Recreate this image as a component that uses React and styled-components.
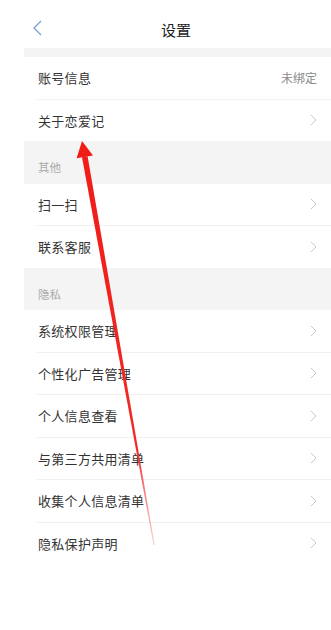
import React from "react";
import styled, { createGlobalStyle } from "styled-components";

const GlobalStyle = createGlobalStyle`
  html, body {
    margin: 0;
    padding: 0;
    background: #ffffff;
  }
  body {
    font-family: "Noto Sans CJK SC", "Noto Sans", sans-serif;
    -webkit-font-smoothing: antialiased;
  }
`;

const sections = [
  {
    title: null,
    items: [
      { label: "账号信息", value: "未绑定" },
      { label: "关于恋爱记" },
    ],
  },
  {
    title: "其他",
    items: [{ label: "扫一扫" }, { label: "联系客服" }],
  },
  {
    title: "隐私",
    items: [
      { label: "系统权限管理" },
      { label: "个性化广告管理" },
      { label: "个人信息查看" },
      { label: "与第三方共用清单" },
      { label: "收集个人信息清单" },
      { label: "隐私保护声明" },
    ],
  },
];

export default function App() {
  return (
    <>
      <GlobalStyle />
      <Screen>
        <Page>
          <Header>
            <BackButton aria-label="back">
              <svg width="10" height="16" viewBox="0 0 10 16">
                <path d="M9 1 L2 8 L9 15" fill="none" stroke="#7d9fd6" strokeWidth="1.3" />
              </svg>
            </BackButton>
            <Title>设置</Title>
          </Header>

          <TopGap />

          {sections.map((section, i) => (
            <React.Fragment key={i}>
              {section.title && <SectionHead>{section.title}</SectionHead>}
              <Group>
                {section.items.map((item, j) => (
                  <React.Fragment key={item.label}>
                    {j > 0 && <Divider />}
                    <Row>
                      <Label>{item.label}</Label>
                      {item.value ? (
                        <Value>{item.value}</Value>
                      ) : (
                        <Chevron width="7" height="12" viewBox="0 0 7 12">
                          <path d="M1 1 L6 6 L1 11" fill="none" stroke="#c9c9c9" strokeWidth="1" />
                        </Chevron>
                      )}
                    </Row>
                  </React.Fragment>
                ))}
              </Group>
            </React.Fragment>
          ))}
        </Page>

        <Annotation width="331" height="630" viewBox="0 0 331 630">
          <defs>
            <linearGradient id="shaft" x1="84" y1="157" x2="154" y2="545" gradientUnits="userSpaceOnUse">
              <stop offset="0" stopColor="#f01c18" />
              <stop offset="0.75" stopColor="#f02a26" />
              <stop offset="1" stopColor="#f07a78" stopOpacity="0.4" />
            </linearGradient>
          </defs>
          <polygon points="82,141 93,155.4 76.6,158.3" fill="#f01c18" />
          <polygon points="87.6,156.3 154.6,544.9 153.6,545.1 82,157.3" fill="url(#shaft)" />
        </Annotation>
      </Screen>
    </>
  );
}

const Screen = styled.div`
  position: relative;
  width: 331px;
  height: 630px;
  overflow: hidden;
  background: #ffffff;
`;

const Page = styled.div`
  margin-left: 24px;
  width: 307px;
  display: flex;
  flex-direction: column;
`;

const Header = styled.div`
  position: relative;
  height: 48px;
  display: flex;
  align-items: center;
  justify-content: center;
`;

const BackButton = styled.div`
  position: absolute;
  left: 8px;
  top: 20px;
  display: flex;
`;

const Title = styled.div`
  font-size: 15px;
  color: #222;
  margin-top: 10px;
  margin-left: -3px;
`;

const TopGap = styled.div`
  height: 9px;
  background: #f4f4f4;
`;

const SectionHead = styled.div`
  height: 42.5px;
  box-sizing: border-box;
  background: #f4f4f4;
  padding: 19px 0 0 14px;
  font-size: 11.5px;
  line-height: 15px;
  color: #aaaaaa;
`;

const Group = styled.div`
  display: flex;
  flex-direction: column;
  background: #ffffff;
`;

const Row = styled.div`
  height: 41.5px;
  display: flex;
  align-items: center;
  justify-content: space-between;
  padding: 0 14px 0 14px;
`;

const Divider = styled.div`
  height: 1px;
  margin-left: 13px;
  background: #f0f0f0;
`;

const Label = styled.span`
  font-size: 13px;
  color: #333333;
  letter-spacing: 0.3px;
`;

const Value = styled.span`
  font-size: 12px;
  color: #8a8a8a;
`;

const Chevron = styled.svg`
  display: block;
  margin-right: 0;
`;

const Annotation = styled.svg`
  position: absolute;
  left: 0;
  top: 0;
  pointer-events: none;
`;
